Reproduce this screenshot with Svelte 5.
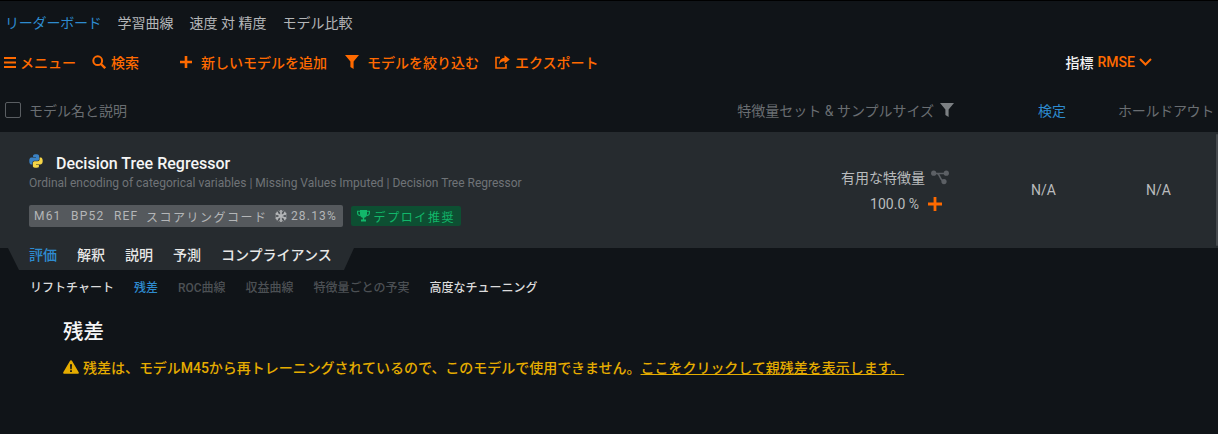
<script>
  const tabs = ['リーダーボード', '学習曲線', '速度 対 精度', 'モデル比較'];
  const insightTabs = ['評価', '解釈', '説明', '予測', 'コンプライアンス'];
  const subTabs = [
    { label: 'リフトチャート', kind: 'on' },
    { label: '残差', kind: 'active' },
    { label: 'ROC曲線', kind: 'off' },
    { label: '収益曲線', kind: 'off' },
    { label: '特徴量ごとの予実', kind: 'off' },
    { label: '高度なチューニング', kind: 'on' }
  ];
</script>

<div class="page">
  <nav class="tabs">
    {#each tabs as t, i}
      <span class:active={i === 0}>{t}</span>
    {/each}
  </nav>

  <div class="toolbar">
    <div class="tool t-menu">
      <svg width="12" height="11" viewBox="0 0 12 11"><path d="M0 1h12M0 5.5h12M0 10h12" stroke="currentColor" stroke-width="2"/></svg>
      <span>メニュー</span>
    </div>
    <div class="tool t-search">
      <svg width="14" height="14" viewBox="0 0 14 14" fill="none"><circle cx="5.7" cy="5.7" r="4.4" stroke="currentColor" stroke-width="2"/><path d="M9 9l4.2 4.2" stroke="currentColor" stroke-width="2.4"/></svg>
      <span>検索</span>
    </div>
    <div class="tool t-add">
      <svg width="12" height="12" viewBox="0 0 12 12"><path d="M6 0v12M0 6h12" stroke="currentColor" stroke-width="2.6"/></svg>
      <span>新しいモデルを追加</span>
    </div>
    <div class="tool t-filter">
      <svg width="14" height="14" viewBox="0 0 14 14"><path d="M0 0h14L8.6 6.6V14L5.4 12V6.6z" fill="currentColor"/></svg>
      <span>モデルを絞り込む</span>
    </div>
    <div class="tool t-export">
      <svg width="15" height="14" viewBox="0 0 15 14" fill="none"><path d="M5 2.5H1v10.5h10V9" stroke="currentColor" stroke-width="1.6"/><path d="M9.5 0.2l5.3 4.3-5.3 4.3V6.2C7 6.2 5.2 7 4.2 9.8 4 5.5 6.3 3 9.5 2.8z" fill="currentColor"/></svg>
      <span>エクスポート</span>
    </div>
    <div class="metric">
      <span class="metric-label">指標</span>
      <span class="metric-value">RMSE</span>
      <svg width="13" height="8" viewBox="0 0 13 8" fill="none"><path d="M1 1l5.5 5.5L12 1" stroke="currentColor" stroke-width="2"/></svg>
    </div>
  </div>

  <div class="thead">
    <span class="check"></span>
    <span class="th-name">モデル名と説明</span>
    <span class="th-feat">特徴量セット & サンプルサイズ</span>
    <svg class="th-filter" width="14" height="14" viewBox="0 0 14 14"><path d="M0 0h14L8.6 6.6V14L5.4 12V6.6z" fill="currentColor"/></svg>
    <span class="th-val">検定</span>
    <span class="th-hold">ホールドアウト</span>
  </div>

  <section class="row">
    <div class="row-main">
      <div class="title-line">
        <svg class="py" width="14" height="14" viewBox="0 0 14 14">
          <path d="M6.9 0.3C4 0.3 4.1 1.6 4.1 1.6V3h2.9v.6H2.5S0.3 3.3 0.3 6.9 2.2 10.4 2.2 10.4h1.2V8.7s-.1-2 1.9-2h2.9s1.9 0 1.9-1.8V2.1S10.4 0.3 6.9 0.3z" fill="#3b82c4"/>
          <path d="M7.1 13.7c2.9 0 2.8-1.3 2.8-1.3V11H7v-.6h4.5s2.2.3 2.2-3.3-1.9-3.5-1.9-3.5h-1.2v1.7s.1 2-1.9 2H5.8s-1.9 0-1.9 1.8v2.8s-.3 1.8 3.2 1.8z" fill="#f5d547"/>
        </svg>
        <h2>Decision Tree Regressor</h2>
      </div>
      <p class="desc">Ordinal encoding of categorical variables | Missing Values Imputed | Decision Tree Regressor</p>
      <div class="badges">
        <div class="badge-grey">
          <span>M61</span><span>BP52</span><span>REF</span><span class="kana">スコアリングコード</span>
          <span class="snow">
            <svg width="12" height="12" viewBox="0 0 12 12" fill="none" stroke="currentColor" stroke-width="1.6"><path d="M6 0v12M0.8 3l10.4 6M0.8 9l10.4-6"/><path d="M4 .6L6 2.6 8 .6M4 11.4L6 9.4l2 2M.4 5l2.4-.9L2.2 1.6M11.6 7l-2.4.9.6 2.5M.4 7l2.4.9-.6 2.5M11.6 5l-2.4-.9.6-2.5" stroke-width="1"/></svg>
            28.13%
          </span>
        </div>
        <div class="badge-green">
          <svg width="13" height="12" viewBox="0 0 13 12" fill="currentColor"><path d="M3 0h7v4.5C10 6.5 8.5 7.5 7.2 7.7V9.5H9V11.5H4V9.5h1.8V7.7C4.5 7.5 3 6.5 3 4.5z"/><path d="M3 1.2H.6V3c0 1.4 1.2 2.4 2.8 2.6M10 1.2h2.4V3c0 1.4-1.2 2.4-2.8 2.6" fill="none" stroke="currentColor" stroke-width="1.1"/></svg>
          <span>デプロイ推奨</span>
        </div>
      </div>
    </div>
    <div class="row-feat">
      <div class="feat-line">
        <span>有用な特徴量</span>
        <svg width="18" height="15" viewBox="0 0 18 15" fill="none"><path d="M2.5 3.5H15.5M6 3.5c3 0 3 7.5 6.5 7.5" stroke="#5c6065" stroke-width="1.6"/><circle cx="2.7" cy="3.2" r="2.6" fill="#5c6065"/><circle cx="15.3" cy="3.2" r="2.6" fill="#5c6065"/><circle cx="13" cy="11.6" r="2.6" fill="#5c6065"/></svg>
      </div>
      <div class="pct-line">
        <span>100.0 %</span>
        <svg width="14" height="14" viewBox="0 0 14 14"><path d="M7 0v14M0 7h14" stroke="#ff6a00" stroke-width="2.8"/></svg>
      </div>
    </div>
    <div class="cell c-val">N/A</div>
    <div class="cell c-hold">N/A</div>
    <div class="scroll"></div>
  </section>

  <div class="insights">
    {#each insightTabs as t, i}
      <span class:active={i === 0}>{t}</span>
    {/each}
  </div>

  <div class="subtabs">
    {#each subTabs as s}
      <span class={s.kind}>{s.label}</span>
    {/each}
  </div>

  <main class="content">
    <h1>残差</h1>
    <p class="warn">
      <svg width="16" height="14" viewBox="0 0 16 14"><path d="M8 0.3c.5 0 .9.3 1.1.7l6.6 11.2c.4.8-.1 1.6-1 1.6H1.3c-.9 0-1.4-.8-1-1.6L6.9 1c.2-.4.6-.7 1.1-.7z" fill="#e5ac00"/><path d="M7 4.2h2l-.3 5H7.3zM7.1 10.2h1.8V12H7.1z" fill="#101418"/></svg>
      <span>残差は、モデルM45から再トレーニングされているので、このモデルで使用できません。</span><a href="#top">ここをクリックして親残差を表示します。</a>
    </p>
  </main>
</div>

<style>
  :global(body) {
    margin: 0;
    background: #101418;
  }
  .page {
    width: 1218px;
    height: 434px;
    overflow: hidden;
    background: #101418;
    border-top: 1px solid #000;
    box-sizing: border-box;
    font-family: Roboto, "Noto Sans CJK JP", sans-serif;
    color: #b9bbbd;
  }
  .tabs {
    display: flex;
    gap: 16px;
    height: 41px;
    align-items: center;
    padding-left: 5px;
    font-size: 14px;
    color: #b4b6b8;
  }
  .tabs .active { color: #2e8bcf; letter-spacing: -0.2px; }
  .toolbar {
    display: flex;
    align-items: center;
    height: 40px;
    color: #ff6a00;
    font-size: 14px;
    font-weight: 500;
    padding-left: 4px;
  }
  .tool {
    display: flex;
    align-items: center;
    gap: 5px;
  }
  .t-menu { gap: 4px; }
  .t-search { margin-left: 16px; }
  .t-add { margin-left: 41px; gap: 9px; }
  .t-filter { margin-left: 18px; gap: 8px; }
  .t-export { margin-left: 16px; }
  .metric {
    margin-left: auto;
    margin-right: 66px;
    display: flex;
    align-items: center;
    gap: 4px;
  }
  .metric-label { color: #f3f3f3; }
  .thead {
    display: flex;
    align-items: center;
    height: 50px;
    box-sizing: border-box;
    padding: 5px 4px 0 5px;
    font-size: 14px;
    color: #6a6e72;
    white-space: nowrap;
  }
  .check {
    width: 14px;
    height: 14px;
    border: 1px solid #5a5e62;
    border-radius: 2px;
    margin-right: 8px;
  }
  .th-feat { margin-left: auto; }
  .th-filter { margin-left: 6px; margin-top: 1px; color: #7c8083; }
  .th-val { margin-left: 84px; color: #2e8bcf; }
  .th-hold { margin-left: 52px; letter-spacing: -0.3px; }
  .row {
    position: relative;
    display: flex;
    height: 116px;
    background: #262b2f;
    box-sizing: border-box;
    padding-left: 29px;
  }
  .row-main { flex: 1; padding-top: 21px; }
  .title-line { display: flex; align-items: center; gap: 13px; height: 20px; }
  .py { margin-top: -4px; }
  h2 {
    margin: 0;
    font-size: 16px;
    font-weight: 500;
    color: #f5f5f5;
  }
  .desc {
    margin: 2px 0 0;
    font-size: 12px;
    line-height: 16px;
    color: #6f7377;
  }
  .badges { display: flex; align-items: center; gap: 8px; margin-top: 14px; }
  .badge-grey {
    display: flex;
    align-items: center;
    gap: 9.5px;
    height: 22px;
    padding: 0 5.5px 0 5px;
    border-radius: 2px;
    background: #55595d;
    color: #b4b6b8;
    font-size: 12px;
    letter-spacing: 1.2px;
    white-space: nowrap;
  }
  .kana { letter-spacing: 1.5px; margin-left: -2px; }
  .snow { display: inline-flex; align-items: center; gap: 4px; margin-left: -2px; }
  .badge-green {
    display: flex;
    align-items: center;
    gap: 4px;
    height: 20px;
    padding: 0 6px;
    border-radius: 2px;
    background: #0d4f32;
    color: #12b76a;
    font-size: 12px;
    letter-spacing: 1.6px;
    white-space: nowrap;
  }
  .row-feat {
    width: 110px;
    margin-right: 82px;
    display: flex;
    flex-direction: column;
    align-items: flex-end;
    padding-top: 35px;
    font-size: 14px;
    color: #b9bbbd;
  }
  .feat-line { display: flex; align-items: center; gap: 6px; height: 20px; }
  .pct-line { display: flex; align-items: center; gap: 9px; height: 20px; margin-top: 7px; margin-right: 7px; }
  .cell {
    padding-top: 50px;
    font-size: 14px;
    color: #b9bbbd;
  }
  .c-val { width: 115px; }
  .c-hold { width: 72px; }
  .scroll {
    position: absolute;
    right: 0;
    top: 2px;
    width: 2px;
    height: 112px;
    background: #45494d;
    border-radius: 1px;
  }
  .insights {
    display: flex;
    gap: 20px;
    width: 346px;
    height: 22px;
    margin-left: 8px;
    box-sizing: border-box;
    padding-left: 21px;
    align-items: flex-start;
    line-height: 14px;
    background: #262b2f;
    clip-path: polygon(0 0, 100% 0, 336px 100%, 11px 100%);
    color: #e8e8e8;
    font-size: 14px;
    font-weight: 500;
  }
  .insights .active { color: #2e8bcf; }
  .subtabs {
    display: flex;
    gap: 20px;
    height: 32px;
    align-items: center;
    padding-left: 30px;
    font-size: 12px;
    font-weight: 500;
  }
  .subtabs .on { color: #dcdcdc; }
  .subtabs .active { color: #2e8bcf; }
  .subtabs .off { color: #4c5054; }
  .content { padding: 16px 0 0 63px; }
  h1 {
    margin: 0;
    font-size: 20.5px;
    line-height: 28px;
    font-weight: 500;
    color: #f5f5f5;
  }
  .warn {
    display: flex;
    align-items: center;
    margin: 11px 0 0;
    font-size: 14px;
    font-weight: 500;
    letter-spacing: -0.03px;
    color: #e5ac00;
    white-space: nowrap;
  }
  .warn svg { margin-right: 4px; }
  .warn a { color: #e5ac00; text-decoration: underline; }
</style>
